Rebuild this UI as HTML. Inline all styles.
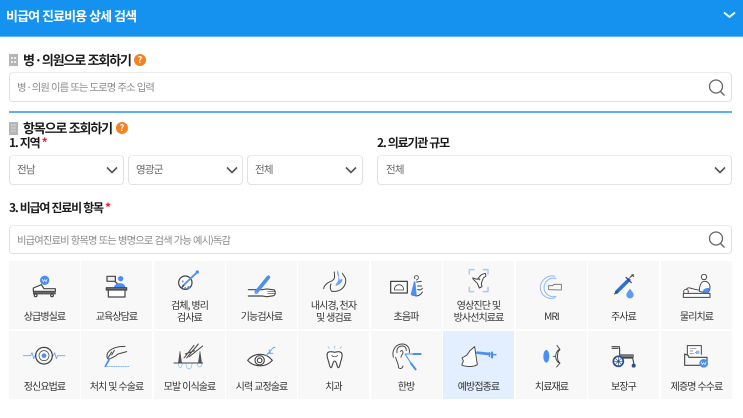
<!DOCTYPE html>
<html lang="ko"><head><meta charset="utf-8"><style>
*{box-sizing:border-box}
html,body{margin:0;padding:0;background:#fff}
body{width:743px;height:418px;overflow:hidden;position:relative;font-family:"Noto Sans CJK KR","Liberation Sans",sans-serif}
.a{position:absolute;white-space:nowrap}
.hd{left:0;top:0;width:743px;height:37px;background:#1592f0;border-bottom:1px solid #5cb4f5}
.t{font-weight:700;color:#1c1c1c;line-height:18px}
.h2{font-size:13px;letter-spacing:-1.15px}
.h3{font-size:12px;letter-spacing:-1.2px}
.box{background:#fff;border:1px solid #e2e2e2;border-top-color:#ececec;border-radius:4px}
.ph{font-size:10.3px;color:#8b8b8b;line-height:16px;letter-spacing:-.85px}
.val{font-size:10.5px;color:#666;line-height:16px;letter-spacing:-.8px}
.q{width:12px;height:12px;border-radius:50%;background:#f58220;color:#fff;font-size:9px;line-height:12px;text-align:center;font-weight:700}
.c{position:absolute;width:71px;height:68px;background:#f8f8f8}
.c.on{background:#e3eeff}
.l{position:absolute;left:-4px;right:-4px;text-align:center;font-size:10px;line-height:12px;color:#333;letter-spacing:-.9px;white-space:nowrap}
.s1{top:49px}.s2{top:37.500px}
i{color:#e22;font-style:normal}
svg{position:absolute;left:0;top:0}
</style></head><body>
<div class="a hd"></div>
<div class="a" style="left:6px;top:6px;font-size:13px;font-weight:700;color:#fff;line-height:19px;letter-spacing:-.88px">비급여 진료비용 상세 검색</div>

<div class="a" style="left:9px;top:54px;width:9px;height:12px;background:#b5b5b5"></div>
<div class="a t h2" style="left:23px;top:50.500px">병 · 의원으로 조회하기</div>
<div class="a q" style="left:134px;top:54px">?</div>
<div class="a box" style="left:9px;top:72px;width:723px;height:30px"></div>
<div class="a ph" style="left:17px;top:79px">병 · 의원 이름 또는 도로명 주소 입력</div>
<div class="a" style="left:9px;top:111px;width:723px;height:2px;background:#5fb0f0"></div>

<div class="a" style="left:9px;top:122px;width:9px;height:13px;background:#b5b5b5"></div>
<div class="a t h2" style="left:23px;top:119px">항목으로 조회하기</div>
<div class="a q" style="left:116px;top:122px">?</div>

<div class="a t h3" style="left:9px;top:134px">1. 지역 <i>*</i></div>
<div class="a t h3" style="left:377px;top:134px">2. 의료기관 규모</div>
<div class="a box" style="left:9px;top:155px;width:115px;height:30px"></div>
<div class="a box" style="left:128px;top:155px;width:115px;height:30px"></div>
<div class="a box" style="left:247px;top:155px;width:116px;height:30px"></div>
<div class="a box" style="left:377px;top:155px;width:355px;height:30px"></div>
<div class="a val" style="left:17px;top:162px">전남</div>
<div class="a val" style="left:136px;top:162px">영광군</div>
<div class="a val" style="left:255px;top:162px">전체</div>
<div class="a val" style="left:386px;top:162px">전체</div>

<div class="a t h3" style="left:9px;top:199px">3. 비급여 진료비 항목 <i>*</i></div>
<div class="a box" style="left:9px;top:225px;width:723px;height:29px"></div>
<div class="a ph" style="left:17px;top:232px">비급여진료비 항목명 또는 병명으로 검색 가능 예시)독감</div>

<div class="c" style="left:9px;top:261px"><div class="l s1">상급병실료</div></div>
<div class="c" style="left:81px;top:261px"><div class="l s1">교육상담료</div></div>
<div class="c" style="left:154px;top:261px"><div class="l s2">검체, 병리<br>검사료</div></div>
<div class="c" style="left:226px;top:261px"><div class="l s1">기능검사료</div></div>
<div class="c" style="left:298px;top:261px"><div class="l s2">내시경, 천자<br>및 생검료</div></div>
<div class="c" style="left:370.500px;top:261px"><div class="l s1">초음파</div></div>
<div class="c" style="left:443px;top:261px"><div class="l s2">영상진단 및<br>방사선치료료</div></div>
<div class="c" style="left:516px;top:261px"><div class="l s1">MRI</div></div>
<div class="c" style="left:588px;top:261px"><div class="l s1">주사료</div></div>
<div class="c" style="left:661px;top:261px"><div class="l s1">물리치료</div></div>

<div class="c" style="left:9px;top:331px"><div class="l s1">정신요법료</div></div>
<div class="c" style="left:81px;top:331px"><div class="l s1">처치 및 수술료</div></div>
<div class="c" style="left:154px;top:331px"><div class="l s1">모발 이식술료</div></div>
<div class="c" style="left:226px;top:331px"><div class="l s1">시력 교정술료</div></div>
<div class="c" style="left:298px;top:331px"><div class="l s1">치과</div></div>
<div class="c" style="left:370.500px;top:331px"><div class="l s1">한방</div></div>
<div class="c on" style="left:443px;top:331px"><div class="l s1">예방접종료</div></div>
<div class="c" style="left:516px;top:331px"><div class="l s1">치료재료</div></div>
<div class="c" style="left:588px;top:331px"><div class="l s1">보장구</div></div>
<div class="c" style="left:661px;top:331px"><div class="l s1">제증명 수수료</div></div>

<svg width="743" height="418" viewBox="0 0 743 418" fill="none">
<path d="M724 12.500l5.500 4.500 5.500-4.500" stroke="#fff" stroke-width="1.800"/>
<g stroke="#666" stroke-width="1.300"><circle cx="716" cy="86.500" r="6.500"/><path d="M720.500 91.500l4 4"/><circle cx="716" cy="238.500" r="6.500"/><path d="M720.500 243.500l4 4"/></g>
<g stroke="#555" stroke-width="1.600"><path d="M107 167.500l5 5 5-5M227 167.500l5 5 5-5M346 167.500l5 5 5-5M715 167.500l5 5 5-5"/></g>
<g fill="#eee"><rect x="11" y="57" width="2" height="2"/><rect x="14" y="57" width="2" height="2"/><rect x="11" y="61" width="2" height="2"/><rect x="14" y="61" width="2" height="2"/></g>
<path d="M11 125h5M11 128h5M11 131h5" stroke="#d5d5d5"/>

<g transform="translate(0,258) scale(.33333)" stroke="#444" stroke-width="3.600" stroke-linecap="round" stroke-linejoin="round">
 <circle cx="134" cy="67" r="14" fill="#4a8ff5" stroke="none"/><path d="M127 64l3 7 4-6 4 6 3-7" stroke="#fff" stroke-width="2"/>
 <path d="M100 90l24-10 8 12h34v8H100z" fill="#fff"/><path d="M100 100h66v8h-66z" fill="#666" stroke-width="2"/><circle cx="107" cy="112" r="4" fill="#fff"/><circle cx="156" cy="112" r="4" fill="#fff"/>
 <rect x="321" y="55" width="25" height="15" fill="#eee"/><path d="M346 72l8 6"/>
 <circle cx="362" cy="62" r="8" fill="#4a8ff5" stroke="none"/><path d="M342 88c2-16 32-18 34 0z" fill="#4a8ff5" stroke="none"/>
 <rect x="319" y="89" width="61" height="7" fill="#777"/><rect x="325" y="96" width="50" height="21" fill="#fff"/>
 <circle cx="556" cy="74" r="20" fill="#fff" stroke-width="3.800"/><path d="M548 84l40-38" stroke="#4a8ff5" stroke-width="5.500"/><circle cx="592" cy="42" r="5" fill="#4a8ff5" stroke="none"/>
 <g fill="#4a8ff5" stroke="none"><circle cx="566" cy="88" r="4"/><circle cx="548" cy="70" r="3"/><circle cx="556" cy="90" r="3"/></g><path d="M546 88l6-6" stroke="#444"/>

 <path d="M70 293h22l4-9 5 18 4-9h55l4-9 5 18 4-9h22" stroke="#6da3f7" stroke-width="2.500"/>
 <circle cx="132" cy="293" r="25" fill="#f8f8f8" stroke-width="3.800" stroke-dasharray="7 2"/><circle cx="132" cy="293" r="15" stroke-width="2.200"/><circle cx="132" cy="293" r="7" fill="#4a8ff5" stroke="none"/>
 <path d="M375 265c-20 0-42 4-52 20-3 6-3 14 1 18 12-2 22-8 30-15l26-7M335 282l-10 16M343 277l-8 14" stroke-width="3"/>
 <path d="M329 302l-13 23" stroke="#4a8ff5" stroke-width="5"/><path d="M320 326h68" stroke="#6da3f7" stroke-width="2.200" stroke-dasharray="4 3"/>
 <path d="M522 315h86" stroke-width="3"/><path d="M535 315l5-35 5 35zM595 315l5-35 5 35z" fill="#555" stroke-width="1.500"/>
 <path d="M552 300l30-38M560 300l35-42M568 296l40-32M556 288l28-10" stroke-width="3"/>
 <path d="M535 318c2 14 10 14 12 0M558 318c2 20 16 20 18 0M592 318c2 12 12 12 14 0" stroke="#8db5f8" stroke-width="2"/>
</g>

<g transform="translate(225,258) scale(.33333)" stroke="#444" stroke-width="3.400" stroke-linecap="round" stroke-linejoin="round">
 <path d="M70 95h42l12-2 24 3c4 4 4 14-2 17l-20 3-16-2H70" fill="#fff"/><path d="M128 101h22M128 107h22" stroke-width="2"/>
 <path d="M94 102l36-44" stroke="#4a8ff5" stroke-width="11"/><path d="M90 108l4-6" stroke="#8db5f8" stroke-width="3"/>
 <path d="M328 42c0 14 4 18-6 26-10 4-24 10-26 24M320 100c20 2 38-6 42-28 2-14-6-18-10-26M318 78c-4 8-2 18 2 22" stroke-width="3"/>
 <path d="M338 36c-6 12 6 20 2 30-2 8-8 10-8 18 6-2 22-8 20-22-6 6-10 2-10-6 0-8-2-14-4-20z" fill="#6da3f7" stroke="none"/>
 <rect x="497" y="70" width="50" height="35" fill="#fff" stroke-width="3.800"/><path d="M508 96c0-10 6-16 14-16s14 6 14 16z" stroke-width="2.400"/>
 <path d="M570 62c-6-8 6-12 10-6 2 4-2 8-6 10" stroke-width="2.500"/><path d="M567 70l-10 40c6 6 16 6 18 0l-4-40z" fill="#4a8ff5" stroke="none"/>
 <path d="M575 72l14-2M578 84l12 0M578 95c8 2 12 0 14-4M572 114c10 0 16-4 20-12" stroke-width="3"/>

 <path d="M68 307c20-24 54-24 74 0-20 22-54 22-74 0z" fill="#fff"/><circle cx="104" cy="307" r="14" fill="#fff"/><circle cx="104" cy="307" r="7"/>
 <path d="M122 294l24-26M146 268l4 0M128 286h16M132 276l4 10" stroke="#6da3f7" stroke-width="3"/>
 <path d="M308 284c8-6 14-2 21-1 7-1 13-5 20 1 5 6 2 16-1 24-3 7-3 20-8 21-6-2-3-18-11-20-8 2-5 18-11 20-5-1-5-14-8-21-3-8-6-18-2-24z" fill="#fff"/><path d="M320 292c4 6 14 6 18 0" stroke-width="2"/>
 <path d="M309 266l4 5M329 264v7M349 266l-4 5" stroke="#8db5f8" stroke-width="2.500"/>
 <path d="M505 298c-6-24 10-40 26-40 16 0 24 12 22 26M512 298c2 12 10 20 8 30 4 6 12 4 14-4M516 284c-2-14 6-20 16-20 8 0 12 6 12 14M526 280c4-4 8-2 8 4-1 6-6 8-6 14" stroke-width="2.800"/>
 <path d="M540 288h46M540 288l30 46" stroke="#4a8ff5" stroke-width="3"/><path d="M565 288h22M558 316l14 18" stroke="#4a8ff5" stroke-width="6"/>
</g>

<g transform="translate(440,258) scale(.33333)" stroke="#444" stroke-width="3.400" stroke-linecap="round" stroke-linejoin="round">
 <path d="M88 48V35h14M130 35h14v13M88 88v13h13M144 88v13h-14" stroke="#a9c8fb" stroke-width="4.500"/>
 <path d="M98 60l14 4 12-14 12-4 2 8-8 6-6 16 2 10-8 4-6-14-12-12z" fill="#fff" stroke-width="3"/><circle cx="118" cy="64" r="3" fill="#555" stroke="none"/>
 <path d="M345 55c-22-6-44 12-44 34 0 22 22 38 44 30M348 62c-16-6-36 8-36 27s20 31 36 26" stroke="#8db5f8" stroke-width="2.800"/>
 <path d="M326 95v-12h12l4-4h22v17z" stroke-width="2.400" stroke="#666"/>
 <path d="M530 102l36-36" stroke="#2f6fd6" stroke-width="11"/><path d="M524 108l8-8M558 58l16 16M570 58l10-8M576 50l5 5" stroke-width="3.400"/>
 <path d="M570 92c6 9 11 13 11 19a11 10 0 0 1-22 0c0-6 5-10 11-19z" fill="#5a9bf6" stroke="none"/>
 <circle cx="792" cy="57" r="8" fill="#fff" stroke-width="2.800"/><path d="M778 100c0-22 8-30 16-30 8 0 16 6 16 18 0 8-4 16-10 18z" fill="#fff" stroke-width="2.800"/><path d="M786 104c2-10 12-16 24-14-2 10-8 16-24 14z" fill="#4a8ff5" stroke="none"/>
 <path d="M738 100c0-8 6-12 12-10 8 2 20 6 28 6" stroke-width="2.800"/><circle cx="738" cy="101" r="7" fill="#fff" stroke-width="2.800"/>
 <rect x="730" y="106" width="80" height="12" fill="#fff" stroke-width="3"/>

 <path d="M66 322c-1-6 4-8 4-14l-4-8 14-8 10-14 14-12 2 14 6 40c-14 8-34 6-46 2z" fill="#fff" stroke-width="2.800"/>
 <path d="M112 284l36 4" stroke="#4a8ff5" stroke-width="8"/><path d="M148 284v11M156 290h12" stroke="#4a8ff5" stroke-width="4"/><path d="M156 284v14" stroke="#4a8ff5" stroke-width="7"/>
 <ellipse cx="319" cy="295" rx="9" ry="19" fill="#4a8ff5" stroke="none"/>
 <path d="M351 262l9 13c-10 6-10 34 0 40M360 275c-6-2-13 10-13 20s6 20 13 20l-10 12M340 295h6" stroke-width="2.800"/>
 <path d="M516 266h22c2 14 0 24 2 34h38l4 20" stroke-width="3.400"/><path d="M540 290h40v8h-40z" fill="#777" stroke-width="2"/><path d="M516 271h18" stroke-width="3"/>
 <circle cx="535" cy="310" r="15" fill="#fff" stroke="#2b4f8f" stroke-width="5"/><path d="M535 298v24M523 310h24M527 302l16 16M543 302l-16 16" stroke="#2b4f8f" stroke-width="2"/><circle cx="581" cy="323" r="6" fill="#2b4f8f" stroke="none"/>
 <path d="M742 296v-33h42v26" fill="#fff" stroke-width="3"/><path d="M750 272h18M750 279h8M766 283h10M750 286h12" stroke="#777" stroke-width="2"/><rect x="768" y="278" width="10" height="10" fill="#8db5f8" stroke="none"/>
 <path d="M734 322v-34l10 4 3 6h54v24z" fill="#f8f8f8"/>
 <circle cx="791" cy="316" r="13" fill="#4a8ff5" stroke="none"/><path d="M784 312l3 8 4-6 4 6 3-8" stroke="#fff" stroke-width="2"/>
</g>
</svg>
</body></html>
